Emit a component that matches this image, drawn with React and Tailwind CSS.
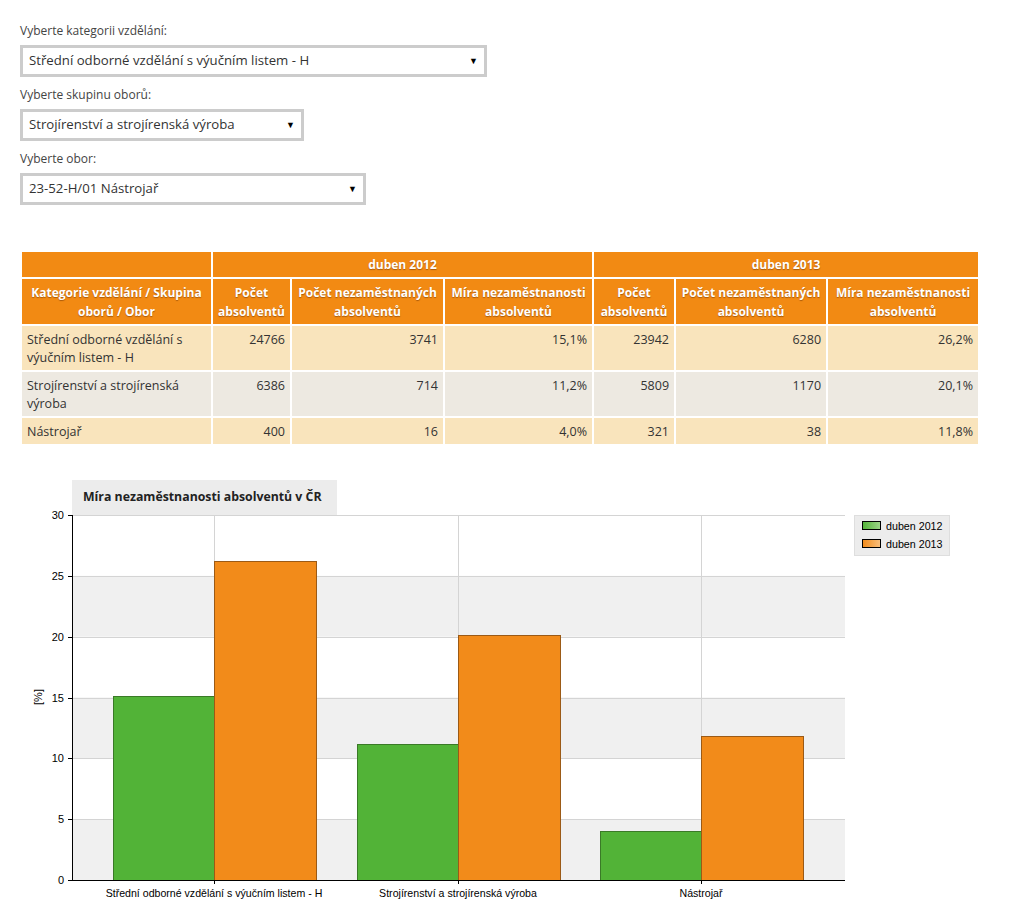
const selects = [
  { label: 'Vyberte kategorii vzdělání:', value: 'Střední odborné vzdělání s výučním listem - H', w: 'w-[467px]' },
  { label: 'Vyberte skupinu oborů:', value: 'Strojírenství a strojírenská výroba', w: 'w-[284px]' },
  { label: 'Vyberte obor:', value: '23-52-H/01 Nástrojař', w: 'w-[346px]' },
];

const rows = [
  { name: 'Střední odborné vzdělání s výučním listem - H', a: [24766, 3741, '15,1%'], b: [23942, 6280, '26,2%'], v: [15.1, 26.2], bg: 'bg-[#f9e4bc]' },
  { name: 'Strojírenství a strojírenská výroba', a: [6386, 714, '11,2%'], b: [5809, 1170, '20,1%'], v: [11.2, 20.1], bg: 'bg-[#ede9e1]' },
  { name: 'Nástrojař', a: [400, 16, '4,0%'], b: [321, 38, '11,8%'], v: [4.0, 11.8], bg: 'bg-[#f9e4bc]' },
];

const chartLabels = ['Střední odborné vzdělání s výučním listem - H', 'Strojírenství a strojírenská výroba', 'Nástrojař'];
const centers = [214, 458, 701];
const H = 365;
const y = (v) => H - (v / 30) * H;

function Select({ label, value, w }) {
  return (
    <div className="flex flex-col">
      <span className="text-[12px] leading-[18px] text-[#444]">{label}</span>
      <div className={`${w} h-[32px] mt-[5px] border-[3px] border-[#cccccc] bg-white flex items-center justify-between pl-[6px] pr-[6px]`}>
        <span className="text-[13.2px] text-[#333]">{value}</span>
        <span className="text-[9px] text-black">▼</span>
      </div>
    </div>
  );
}

const th = 'border-2 border-white bg-[#f28a13] text-white font-bold text-[12px] leading-[19px] text-center px-0 [text-shadow:0_1px_1px_rgba(80,30,0,0.45)]';
const td = 'border-2 border-white text-[12.5px] leading-[18px] text-[#333] px-[5px] pt-[5px] pb-[3px] align-top';

function Chart() {
  return (
    <div className="mt-[34px] flex flex-col">
      <div className="ml-[72px] w-[265px] h-[35px] bg-[#ececec] flex items-center pl-[11px] text-[12.3px] font-bold text-[#222]">
        Míra nezaměstnanosti absolventů v ČR
      </div>
      <svg width="1013" height="399" className="overflow-visible block" style={{ fontFamily: '"Liberation Sans", Arial, sans-serif' }}>
        <defs>
          <linearGradient id="lg" x1="0" x2="1">
            <stop offset="0" stopColor="#52b337" />
            <stop offset="1" stopColor="#9fd68a" />
          </linearGradient>
          <linearGradient id="lo" x1="0" x2="1">
            <stop offset="0" stopColor="#f28b1a" />
            <stop offset="1" stopColor="#f9c07e" />
          </linearGradient>
        </defs>
        {[25, 15, 5].map((v) => (
          <rect key={v} x="72" y={y(v)} width="773" height={y(v - 5) - y(v)} fill="#f0f0f0" />
        ))}
        {[30, 25, 20, 15, 10, 5].map((v) => (
          <line key={v} x1="72" x2="845" y1={Math.round(y(v)) + 0.5} y2={Math.round(y(v)) + 0.5} stroke="#d4d4d4" />
        ))}
        {centers.map((c) => (
          <line key={c} x1={c + 0.5} x2={c + 0.5} y1="0" y2={H} stroke="#d4d4d4" />
        ))}
        {rows.map((r, i) => (
          <g key={i}>
            <rect x={centers[i] - 101 + 0.5} y={Math.round(y(r.v[0])) + 0.5} width="101" height={H - Math.round(y(r.v[0]))} fill="#52b337" stroke="#3a7a27" />
            <rect x={centers[i] + 0.5} y={Math.round(y(r.v[1])) + 0.5} width="102" height={H - Math.round(y(r.v[1]))} fill="#f28b1a" stroke="#9b5a16" />
          </g>
        ))}
        <line x1="72.5" x2="72.5" y1="0" y2={H} stroke="#000" />
        <line x1="72" x2="845" y1={H + 0.5} y2={H + 0.5} stroke="#000" />
        {[30, 25, 20, 15, 10, 5, 0].map((v) => (
          <g key={v}>
            <line x1="68" x2="72" y1={Math.round(y(v)) + 0.5} y2={Math.round(y(v)) + 0.5} stroke="#000" />
            <text x="64" y={y(v) + 4} textAnchor="end" fontSize="11" fill="#000">{v}</text>
          </g>
        ))}
        {centers.map((c, i) => (
          <g key={c}>
            <line x1={c + 0.5} x2={c + 0.5} y1={H} y2={H + 4} stroke="#000" />
            <text x={c} y={H + 17} textAnchor="middle" fontSize="10.6" fill="#000">{chartLabels[i]}</text>
          </g>
        ))}
        <text x="42" y="182" fontSize="11" textAnchor="middle" transform="rotate(-90 42 182)" fill="#000">[%]</text>
        <rect x="854.5" y="0.5" width="95" height="40" fill="#ececec" stroke="#dedede" />
        <rect x="862.5" y="6.5" width="18" height="8" fill="url(#lg)" stroke="#000" />
        <text x="886" y="15" fontSize="10.7" fill="#000">duben 2012</text>
        <rect x="862.5" y="24.5" width="18" height="8" fill="url(#lo)" stroke="#000" />
        <text x="886" y="33" fontSize="10.7" fill="#000">duben 2013</text>
      </svg>
    </div>
  );
}

export default function App() {
  return (
    <div className="bg-white min-h-[914px] pt-[22px] pl-[20px] font-['Open_Sans',sans-serif]">
      <div className="flex flex-col gap-[9px]">
        {selects.map((s) => (
          <Select key={s.label} {...s} />
        ))}
      </div>

      <table className="mt-[45px] table-fixed border-collapse w-[958px]">
        <colgroup>
          <col className="w-[191px]" />
          <col className="w-[79px]" />
          <col className="w-[153px]" />
          <col className="w-[149px]" />
          <col className="w-[82px]" />
          <col className="w-[152px]" />
          <col className="w-[152px]" />
        </colgroup>
        <thead>
          <tr className="h-[27px]">
            <th className={th}></th>
            <th className={th} colSpan={3}>duben 2012</th>
            <th className={th} colSpan={3}>duben 2013</th>
          </tr>
          <tr className="h-[47px]">
            <th className={th}>Kategorie vzdělání / Skupina oborů / Obor</th>
            <th className={th}>Počet absolventů</th>
            <th className={th}>Počet nezaměstnaných absolventů</th>
            <th className={th}>Míra nezaměstnanosti absolventů</th>
            <th className={th}>Počet absolventů</th>
            <th className={th}>Počet nezaměstnaných absolventů</th>
            <th className={th}>Míra nezaměstnanosti absolventů</th>
          </tr>
        </thead>
        <tbody>
          {rows.map((r) => (
            <tr key={r.name} className={r.bg}>
              <td className={td}>{r.name}</td>
              {[...r.a, ...r.b].map((v, i) => (
                <td key={i} className={`${td} text-right`}>{v}</td>
              ))}
            </tr>
          ))}
        </tbody>
      </table>

      <div className="-ml-[20px]">
        <Chart />
      </div>
    </div>
  );
}
